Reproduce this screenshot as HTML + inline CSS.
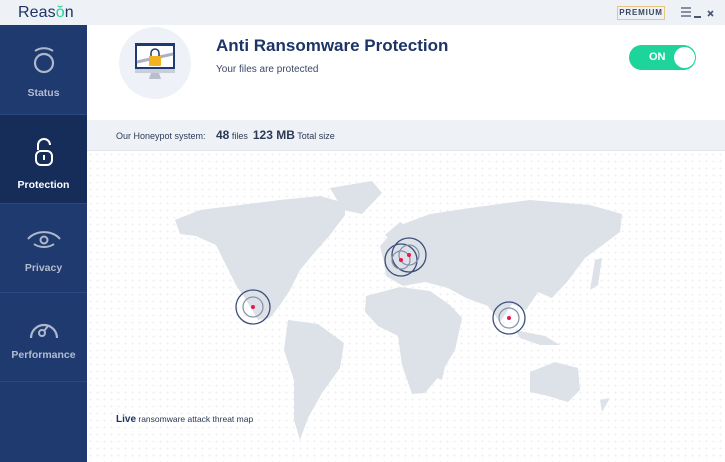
<!DOCTYPE html>
<html><head><meta charset="utf-8"><style>
*{margin:0;padding:0;box-sizing:border-box}
body{width:725px;height:462px;overflow:hidden;font-family:"Liberation Sans",sans-serif;background:#fff;position:relative}
.top{position:absolute;left:0;top:0;width:725px;height:25px;background:#eef1f6}
.logo{position:absolute;left:18px;top:4px;font-size:16px;color:#1d3566;letter-spacing:0.1px}
.logo b{font-weight:normal;color:#1fd39a}
.prem{position:absolute;left:617px;top:6px;width:48px;height:14px;border:1px solid #e9c584;font-size:8px;letter-spacing:0.8px;color:#3a4660;text-align:center;line-height:12px;font-weight:bold}
.side{position:absolute;left:0;top:25px;width:87px;height:437px;background:#1f3a6e}
.item{position:absolute;left:0;width:87px;text-align:center;color:#b3bdd0;font-size:10.5px;font-weight:bold;border-bottom:1px solid #2d4880}
.act{background:#162c59;color:#fff}
.hdr{position:absolute;left:87px;top:25px;width:638px;height:95px;background:#fff}
.hp{position:absolute;left:87px;top:120px;width:638px;height:31px;background:#eef2f7;border-bottom:1px solid #e2e6ec;font-size:9px;color:#2c3a55}
.map{position:absolute;left:87px;top:151px;width:638px;height:311px;background-color:#fff;background-image:radial-gradient(#eceef2 0.8px,transparent 1px);background-size:7px 7px}
</style></head><body>
<div class="top"></div>
<div class="logo">Reas<b>ŏ</b>n</div>
<div class="prem">PREMIUM</div>
<svg style="position:absolute;left:680px;top:6px" width="40" height="14"><g stroke="#4a5570" stroke-width="1.3"><path d="M1 2h10M1 6h10M1 10h10"/><path d="M14 11h7" stroke-width="2"/><path d="M28 5l5 5M33 5l-5 5" stroke-width="1.6"/></g></svg>
<div class="side"></div>
<div class="item" style="top:25px;height:90px;padding-top:62px">Status</div>
<svg style="position:absolute;left:31px;top:45px" width="26" height="30"><path d="M4 6 A14 12 0 0 1 22 6" stroke="#aeb8cc" stroke-width="2" fill="none"/><circle cx="13" cy="18" r="9" stroke="#aeb8cc" stroke-width="2.2" fill="none"/></svg>
<div class="item act" style="top:115px;height:89px;padding-top:64px">Protection</div>
<svg style="position:absolute;left:32px;top:138px" width="24" height="30"><path d="M6 12V7a6 6 0 0 1 12 0" stroke="#fff" stroke-width="2" fill="none"/><rect x="4" y="13" width="16" height="14" rx="5" stroke="#fff" stroke-width="2" fill="none"/><path d="M12 17v5" stroke="#fff" stroke-width="2"/></svg>
<div class="item" style="top:204px;height:89px;padding-top:58px">Privacy</div>
<svg style="position:absolute;left:26px;top:227px" width="36" height="26"><path d="M2 12 A19 15 0 0 1 34 12" stroke="#aeb8cc" stroke-width="2" fill="none"/><path d="M8 17 A14 10 0 0 0 28 17" stroke="#aeb8cc" stroke-width="2" fill="none"/><circle cx="18" cy="13" r="3.5" stroke="#aeb8cc" stroke-width="2" fill="none"/></svg>
<div class="item" style="top:293px;height:89px;padding-top:56px">Performance</div>
<svg style="position:absolute;left:28px;top:316px" width="32" height="24"><path d="M3 22 A13 13 0 1 1 29 22" stroke="#aeb8cc" stroke-width="2.2" fill="none"/><circle cx="14" cy="17" r="3" stroke="#aeb8cc" stroke-width="2" fill="none"/><path d="M16 15l4-5" stroke="#aeb8cc" stroke-width="2"/></svg>
<div class="hdr"></div>
<svg style="position:absolute;left:118px;top:26px" width="74" height="74"><circle cx="37" cy="37" r="36" fill="#eef1f7"/><rect x="17" y="17" width="40" height="26" fill="#1f3a6e"/><rect x="19" y="20" width="36" height="21" fill="#fff"/><rect x="17" y="43" width="40" height="4" fill="#c9ced8"/><path d="M33 47h8l2 6h-12z" fill="#b8becb"/><path d="M19 36l36-8" stroke="#aab2c2" stroke-width="3"/><rect x="31" y="30" width="12" height="10" rx="1" fill="#f3b221"/><path d="M33 30v-3a4 4 0 0 1 8 0v3" stroke="#1f3a6e" stroke-width="1.5" fill="none"/></svg>
<div style="position:absolute;left:216px;top:36px;font-size:17px;font-weight:bold;color:#1d3566">Anti Ransomware Protection</div>
<div style="position:absolute;left:216px;top:64px;font-size:10px;color:#3b4863">Your files are protected</div>
<div style="position:absolute;left:629px;top:45px;width:67px;height:25px;border-radius:13px;background:#1dd49b"></div>
<div style="position:absolute;left:649px;top:51px;font-size:11px;font-weight:bold;color:#fff">ON</div>
<div style="position:absolute;left:674px;top:47px;width:21px;height:21px;border-radius:50%;background:#fff"></div>
<div class="hp"><span style="position:absolute;left:29px;top:11px">Our Honeypot system:</span><span style="position:absolute;left:129px;top:8px"><b style="font-size:12px">48</b> files &nbsp;<b style="font-size:12px">123 MB</b> Total size</span></div>
<div class="map"></div>
<svg style="position:absolute;left:0;top:0" width="725" height="462"><g fill="#dde1e8">
<path d="M175 220L200 210L240 205L280 200L320 196L345 203L345 215L330 235L315 252L300 270L290 290L280 305L270 318L258 320L246 300L236 285L226 265L216 245L196 236L180 234Z"/>
<path d="M330 188L372 181L382 193L362 214L343 210Z"/>
<path d="M288 320L318 324L344 343L340 368L322 393L308 418L300 440L294 420L294 380L284 350Z"/>
<path d="M380 246L398 226L430 214L470 208L530 200L590 205L622 214L620 232L604 244L585 258L567 282L552 298L538 292L526 310L512 304L500 322L488 306L466 298L448 288L425 282L403 286L386 276L384 262Z"/>
<path d="M366 296L400 287L430 291L450 305L462 318L455 350L440 375L425 393L412 394L402 365L398 336L378 326L365 312Z"/>
<path d="M530 372L555 362L578 368L580 390L568 402L548 396L530 392Z"/>
<path d="M515 330L545 336L560 345L540 345L520 338Z"/>
<path d="M600 400L610 398L602 412Z"/>
<path d="M595 260L602 258L598 285L590 290Z"/>
<path d="M385 235L400 222L410 228L398 248Z"/>
<path d="M440 365L446 362L442 380L437 378Z"/>
</g>
<g fill="none" stroke="#3c4e78" stroke-width="1.3"><circle cx="253" cy="307" r="17"/><circle cx="401" cy="260" r="16"/><circle cx="409" cy="255" r="17"/><circle cx="509" cy="318" r="16"/></g>
<g fill="none" stroke="#8590a8" stroke-width="1.2"><circle cx="253" cy="307" r="10"/><circle cx="401" cy="260" r="9"/><circle cx="409" cy="255" r="10"/><circle cx="509" cy="318" r="10"/></g>
<g fill="#e8174e"><circle cx="253" cy="307" r="2"/><circle cx="401" cy="260" r="2"/><circle cx="409" cy="255" r="2"/><circle cx="509" cy="318" r="2"/></g></svg>
<div style="position:absolute;left:116px;top:414px;font-size:8.5px;color:#2c3a55"><b style="font-size:10px;color:#1d3566">Live</b> ransomware attack threat map</div>
</body></html>
